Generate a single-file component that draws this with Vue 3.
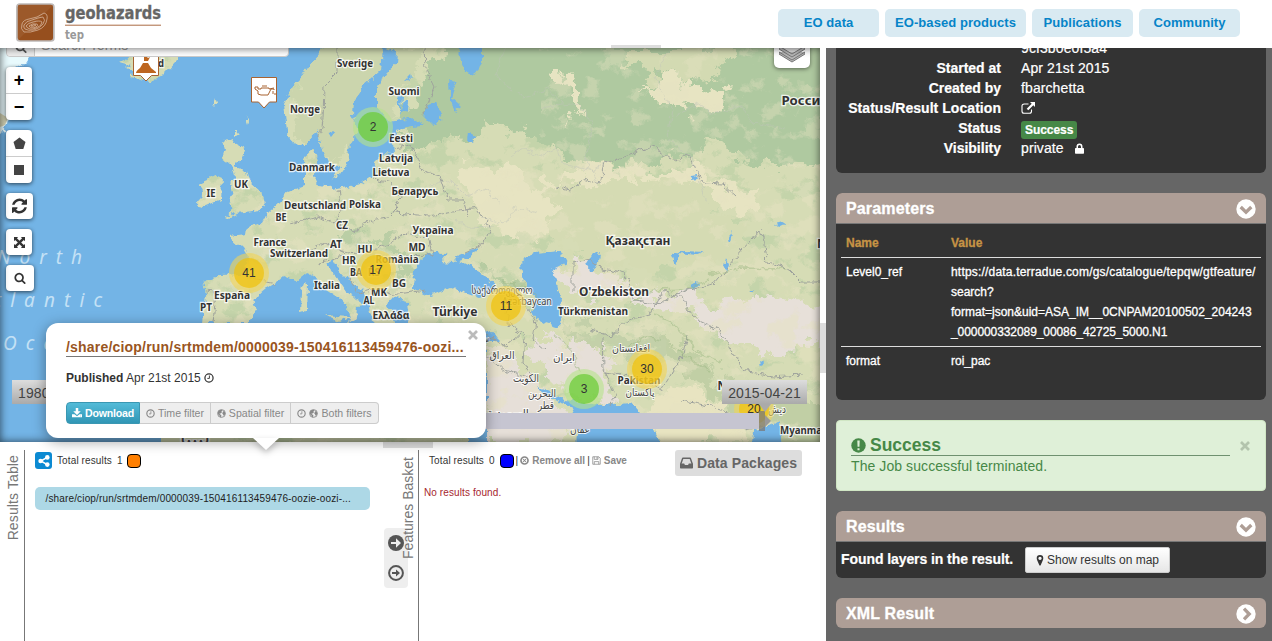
<script setup>
const nav = ['EO data', 'EO-based products', 'Publications', 'Community']

const labels = [
  ['Sverige', 355, 67, 36], ['Suomi', 404, 95, 31], ['Norge', 305, 113, 30], ['Eesti', 401, 142, 24],
  ['Latvija', 396, 162, 34], ['Lietuva', 391, 176, 37], ['Danmark', 312, 171, 46], ['Беларусь', 415, 195, 47],
  ['Deutschland', 315, 209, 62], ['Polska', 365, 208, 32], ['BE', 281, 221, 11], ['UK', 241, 188, 14],
  ['IE', 211, 197, 9], ['CZ', 342, 229, 12], ['Україна', 433, 234, 41], ['France', 270, 246, 33],
  ['Switzerland', 299, 257, 58], ['AT', 336, 248, 12], ['HU', 365, 253, 15], ['MD', 417, 251, 17],
  ['HR', 349, 264, 14], ['România', 397, 263, 43], ['BA', 356, 276, 12], ['RS', 374, 276, 12],
  ['Italia', 327, 289, 26], ['BG', 399, 287, 14], ['MK', 379, 296, 16], ['AL', 369, 304, 11],
  ['Ελλάδα', 391, 319, 37], ['España', 232, 299, 36], ['PT', 206, 311, 12], ['Pakistan', 639, 384, 43],
  ['Türkmenistan', 593, 315, 70], ['Myanma', 801, 434, 42], ['d', 161, 67, 6]
]
const bigLabels = [
  ['Türkiye', 455, 316, 45], ['Қазақстан', 638, 245, 65], ["O'zbekiston", 614, 296, 70], ['Росси', 801, 105, 39], ['N', 822, 248, 10], ['N', 722, 390, 9]
]
const thinLabels = [
  ['საქართველო', 502, 294, 61], ['Azərbaycan', 527, 305, 50], ['ایران', 564, 361, 22], ['العراق', 502, 359, 25],
  ['الكويت', 526, 382, 26], ['البحرين', 542, 397, 28], ['قطر', 546, 409, 16], ['افغانستان', 631, 352, 38],
  ['پاکستان', 640, 396, 29], ['السعودية', 508, 417, 42], ['عمان', 580, 433, 20], ['دیش', 777, 413, 18], ['ليبيا', 195, 443, 30], ['س', 486, 342, 6]
]
const clusters = [
  { n: 2, x: 373, y: 127, c: 'green' }, { n: 41, x: 249, y: 273, c: 'yellow' }, { n: 17, x: 376, y: 270, c: 'yellow' },
  { n: 11, x: 506, y: 306, c: 'yellow' }, { n: 30, x: 647, y: 369, c: 'yellow' }, { n: 3, x: 584, y: 389, c: 'green' },
  { n: 20, x: 754, y: 409, c: 'yellow' }
]
const filters = [
  { icons: ['clock'], text: 'Time filter', w: 71 },
  { icons: ['globe'], text: 'Spatial filter', w: 80 },
  { icons: ['clock', 'globe'], text: 'Both filters', w: 88 }
]
</script>

<template>
  <svg class="defs" aria-hidden="true">
    <symbol id="search" viewBox="0 0 1792 1792"><path d="M1216 832q0-185-131.5-316.5t-316.5-131.5-316.5 131.5-131.5 316.5 131.5 316.5 316.5 131.5 316.5-131.5 131.5-316.5zm512 832q0 52-38 90t-90 38q-54 0-90-38l-343-342q-179 124-399 124-143 0-273.5-55.5t-225-150-150-225-55.5-273.5 55.5-273.5 150-225 225-150 273.5-55.5 273.5 55.5 225 150 150 225 55.5 273.5q0 220-124 399l343 343q37 37 37 90z"/></symbol>
    <symbol id="refresh" viewBox="128 128 1536 1536"><path d="M1639 1056q0 5-1 7-64 268-268 434.5t-478 166.5q-146 0-282.5-55t-243.5-157l-129 129q-19 19-45 19t-45-19-19-45v-448q0-26 19-45t45-19h448q26 0 45 19t19 45-19 45l-137 137q71 66 161 102t187 36q134 0 250-65t186-179q11-17 53-117 8-23 30-23h192q13 0 22.500 9.500t9.500 22.500zm25-800v448q0 26-19 45t-45 19h-448q-26 0-45-19t-19-45 19-45l138-138q-148-137-349-137-134 0-250 65t-186 179q-11 17-53 117-8 23-30 23h-199q-13 0-22.500-9.500t-9.500-22.500v-7q65-268 270-434.500t480-166.500q146 0 284 55.500t245 156.500l130-129q19-19 45-19t45 19 19 45z"/></symbol>
    <symbol id="expand" viewBox="0 0 12 12"><path d="M0 0h4.500L3.200 1.300 6 4.200 8.800 1.300 7.500 0H12v4.500l-1.300-1.300L7.800 6l2.900 2.800L12 7.500V12H7.500l1.300-1.300L6 7.800l-2.800 2.900L4.500 12H0V7.500l1.300 1.300L4.200 6 1.300 3.200 0 4.500z"/></symbol>
    <symbol id="clock" viewBox="0 0 12 12"><circle cx="6" cy="6" r="4.900" fill="none" stroke="currentColor" stroke-width="1.500"/><path d="M6.500 3v3.500H4" fill="none" stroke="currentColor" stroke-width="1.100"/></symbol>
    <symbol id="globe" viewBox="0 0 12 12"><circle cx="6" cy="6" r="5.200" fill="none" stroke="currentColor" stroke-width="1.200"/><path d="M1 4l2-2.500 3-.5 1.500 1-1.500 1 .5 1.500L4.500 6 3 6.200 5 7.500 6 9l-1 2.500L3.500 9 1.500 7zM8.500 2.500l2 1.500.7 2-1 2-1.500 1L8 7l-1-1 .5-1.500z"/></symbol>
    <symbol id="download" viewBox="0 0 12 12"><path d="M4.500 0h3v4h3L6 8.300 1.500 4h3zM0 7.500h3L6 10l3-2.500h3V11H0zM9.800 9.200v.8h.9v-.8z"/></symbol>
    <symbol id="share" viewBox="0 0 12 12"><path d="M9 2.300 3 6l6 3.700" fill="none" stroke="currentColor" stroke-width="1.500"/><circle cx="9.300" cy="2.400" r="2.300"/><circle cx="2.600" cy="6" r="2.300"/><circle cx="9.300" cy="9.600" r="2.300"/></symbol>
    <symbol id="remove" viewBox="0 0 12 12"><circle cx="6" cy="6" r="4.700" fill="none" stroke="currentColor" stroke-width="2.200"/><path d="M4 4l4 4M8 4L4 8" stroke="currentColor" stroke-width="1.400"/></symbol>
    <symbol id="save" viewBox="0 0 12 12"><path d="M1 1h8l2 2v8H1zM3 1v3.500h5V1M3 11V7.500h6V11" fill="none" stroke="currentColor"/><path d="M6 1.500h1.300v2H6z"/></symbol>
    <symbol id="inbox" viewBox="0 0 14 12"><path d="M3 1h8l2.200 6v4H.8V7z" fill="none" stroke="currentColor" stroke-width="1.600" stroke-linejoin="round"/><path d="M1 6.500h3.500L5.300 8.200h3.400l.8-1.700H13V11H1z"/></symbol>
    <symbol id="external" viewBox="0 0 14 12"><path d="M7.500 2H3.200Q1 2 1 4v5.300q0 2 2 2h5.500q2 0 2-2V7.500" fill="none" stroke="currentColor" stroke-width="1.100"/><path d="M9 0h5v5l-1.700-1.700-5 5L5.700 6.700l5-5z"/></symbol>
    <symbol id="lock" viewBox="0 0 10 12"><path d="M2.500 6V4q0-2.700 2.500-2.700T7.500 4v2" fill="none" stroke="currentColor" stroke-width="1.700"/><rect y="5.500" width="10" height="6.300" rx=".7"/></symbol>
    <symbol id="pin" viewBox="0 0 8 12"><path fill-rule="evenodd" d="M4 0a3.600 3.600 0 0 1 3.600 3.600Q7.600 5 6.500 7L4.600 11.500h-1.200L1.500 7Q.4 5 .4 3.600A3.600 3.600 0 0 1 4 0zm0 1.900a1.800 1.800 0 1 0 .01 0z"/></symbol>
    <symbol id="down" viewBox="0 0 20 20"><circle cx="10" cy="10" r="9.700"/><path d="M4.700 8l5.300 5.200L15.300 8" fill="none" stroke="#ae9e96" stroke-width="3.300"/></symbol>
    <symbol id="right" viewBox="0 0 20 20"><circle cx="10" cy="10" r="9.700"/><path d="M8 4.700l5.200 5.300L8 15.300" fill="none" stroke="#ae9e96" stroke-width="3.300"/></symbol>
    <symbol id="arrow-solid" viewBox="0 0 16 16"><circle cx="8" cy="8" r="8"/><path d="M3 6.900h5V3.200L13 8l-5 4.800V9.100H3z" fill="#eee"/></symbol>
    <symbol id="arrow-open" viewBox="0 0 16 16"><circle cx="8" cy="8" r="6.900" fill="none" stroke="currentColor" stroke-width="2"/><path d="M4 6.900h4V4.500L12 8l-4 3.500V9.100H4z"/></symbol>
    <symbol id="exclaim" viewBox="0 0 16 16"><circle cx="8" cy="8" r="7.700"/><path d="M6.700 2.700h2.600L9 9.400H7zM6.900 10.800h2.200V13H6.900z" fill="#dff0d8"/></symbol>
    <symbol id="close" viewBox="0 0 10 10"><path d="M1 1l8 8M9 1L1 9" stroke="currentColor" stroke-width="2.700"/></symbol>
  </svg>

  <div class="page">
    <header class="header">
      <svg class="logo" width="160" height="48" viewBox="0 0 160 48">
        <rect x="16.900" y="4" width="37" height="37" rx="3" fill="#964f1e" stroke="#bdb9b8" stroke-width="1.700"/>
        <path d="M18 5h35L18 40z" fill="#a4673a" opacity=".45"/>
        <g fill="none" stroke="#d4b399" stroke-width=".8">
          <path d="M22 24q1-4 7-5l8-2 7-4q4 1 3 6-1 8-9 11-8 3-14 2-4-3-2-8z"/>
          <path d="M24 25q2-4 8-5l6-2 5-1q3 3 0 7-3 4-9 6-6 1-9-1-2-2-1-4z"/>
          <path d="M26 26q2-3 7-4 7-2 9 0 0 4-6 6-7 3-10-2z"/>
          <path d="M29 26q3-3 8-2 2 1-1 3-5 2-7-1zM31 26q3-2 5-1-2 2-5 1"/>
        </g>
        <text x="65" y="18.500" class="brand" textLength="96" lengthAdjust="spacingAndGlyphs">geohazards</text>
        <path d="M65 25.200h96" stroke="#aa6a43"/>
        <text x="65" y="39" class="tep" textLength="19" lengthAdjust="spacingAndGlyphs">tep</text>
      </svg>
      <nav><a v-for="item in nav" :key="item">{{ item }}</a></nav>
      <i class="handle top"></i>
    </header>

    <main class="body">
      <section class="left">
        <div class="map">
          <svg class="geo" width="820" height="394" viewBox="0 48 820 394">
            <defs>
              <filter id="rough" filterUnits="userSpaceOnUse" x="-20" y="30" width="860" height="430" color-interpolation-filters="sRGB"><feTurbulence type="fractalNoise" baseFrequency=".13" numOctaves="3" seed="4" result="n"/><feDisplacementMap in="SourceGraphic" in2="n" scale="8" xChannelSelector="R" yChannelSelector="G"/></filter>
              <filter id="blob" filterUnits="userSpaceOnUse" x="-20" y="30" width="860" height="430" color-interpolation-filters="sRGB"><feTurbulence type="fractalNoise" baseFrequency=".05" numOctaves="5" seed="8" result="n"/><feDisplacementMap in="SourceGraphic" in2="n" scale="40" xChannelSelector="R" yChannelSelector="G"/></filter>
              <filter id="patch" x="0" y="0" width="100%" height="100%" color-interpolation-filters="sRGB"><feTurbulence type="fractalNoise" baseFrequency=".035 .05" numOctaves="5" seed="12"/><feColorMatrix values="0 0 0 0 .9  0 0 0 0 .885  0 0 0 0 .76  9 0 0 0 -4.900"/></filter>
              <filter id="forest" x="0" y="0" width="100%" height="100%" color-interpolation-filters="sRGB"><feTurbulence type="fractalNoise" baseFrequency=".04 .06" numOctaves="5" seed="31"/><feColorMatrix values="0 0 0 0 .72  0 0 0 0 .81  0 0 0 0 .64  9 0 0 0 -5.100"/></filter>
              <clipPath id="land">
                <path d="M325 30L325 48 312 62 302 77 292 88 284 104 287 132 293 144 303 145 312 136 319 130 323 150 330 165 340 166 330 187 318 185 314 176 318 163 314 149 304 158 304 185 288 191 280 202 268 213 262 224 247 227 246 234 230 236 242 247 248 257 246 275 220 276 203 281 206 294 203 323 248 323 256 310 253 300 266 289 277 282 284 276 297 281 307 273 317 277 326 290 341 300 351 313 347 323 356 318 357 306 366 305 346 292 333 273 327 264 334 259 338 268 350 282 362 290 370 307 375 326 385 335 399 330 393 315 387 305 393 297 407 301 409 325 470 337 490 330 532 383 550 392 565 400 600 405 633 403 648 420 670 460 752 460 754 430 768 426 780 421 783 460 840 460V30z"/>
                <path d="M223 141l12-3-1 5 11 6-3 10-9 7 13 5 3 11 13 12 3 9-5 8-25 3-12 6 12-11-7-6 5-10-3-9 5-5-4-14-9-6 3-10z"/>
                <path d="M213 175l9 4-1 21-21 9-3-4 6-13-5-7 9-4zM120 62l8-4-3-10h52v12l-12 13-16 9-19-5 6-5-9-4 4-3zM304 282l4 4-1 24-6 1 1-18zM325 315l25 2-10 6z"/>
                <path d="M486 340h20l26 38 13 18 24 8 8 18-1 40H486zM162 436h306v20H162z"/>
              </clipPath>
            </defs>
            <path d="M0 48h820v394H0z" fill="#73b4e6"/>
            <path d="M-8 40h36v17l-5 8-8 4-3 35-7 28-13 3z" fill="#e8fafd" filter="url(#rough)"/>
            <path d="M0 113l8 5-3 7-5 2z" fill="#d2d1b3"/>
            <g filter="url(#rough)">
              <g clip-path="url(#land)">
                <path d="M0 30h840v430H0z" fill="#d6dcb5"/>
                <path d="M0 48h820v394H0z" filter="url(#forest)" opacity=".6"/>
                <g filter="url(#blob)">
                  <path d="M465 20h400v140L770 170l-60-27-40 15-45 12-60-11-50-33-95 22-25-18z" fill="#afc9a0"/>
                  <path d="M325 20l95 31-20 57-40 45-30 10-38-27 5-50z" fill="#cbd5ad"/>
                  <path d="M455 165l65 5 30 15 50-18 55 8 35-15 35 24 30 2-3 31-45-12-90-4-45 15-40 25-60-20z" fill="#e7e4c2"/>
                  <path d="M645 83l40-4 50 15-18 15-60 1zM560 65l15 25 4 25-13-14-12-30z" fill="#e7e4c2"/>
                  <path d="M625 48h110l-20 28-55 4-25-15z" fill="#d3dab2"/>
                  <path d="M550 190l55-10 60-2 45 15 15 25 30 22-40 22-60 10-70-5-30-30z" fill="#d5dbb3"/>
                  <path d="M580 258l65 35 50-5 10 20 60-13 60 8v40l-65 10-40-15-60-35-80-10-45-15z" fill="#e7e0d9"/>
                  <path d="M540 330l65 20 10 50-45-2-38-38zM486 335l35 30 50 60-10 20h-80z" fill="#e6dfd8"/>
                  <path d="M570 318l40 20 48-10 15 18-40 12-55-16z" fill="#c3d0a9"/>
                  <path d="M445 300l65-25 35 18-20 20 30 28-15 4-30-18-75 5z" fill="#d6dcb3"/>
                  <path d="M480 260l20 17 30 7 5 10-32-5-25-19z" fill="#b6cba1"/>
                  <path d="M655 330l40 20 20 30 20 8 40-5 60 30v60h-50l-20-55-50-20-30-25z" fill="#c1cfa5"/>
                  <path d="M660 385l50 15 35 20-5 25h-75l-25-30z" fill="#e8e4c1"/>
                  <path d="M335 237l62 4 15 18-10 24-14 13-5-14 20-15-2-13-28-8-30 8z" fill="#bacea5"/>
                </g>
                <path d="M280 165h180l60 70 60 60h240v147H200V210z" filter="url(#patch)" opacity=".5"/>
                <path d="M540 48h280v130H580z" filter="url(#patch)" opacity=".4"/>
              </g>
              <g fill="#73b4e6">
                <path d="M383 48l15 5-1 10-10 9-10 17v18l12 15 24-4 12 7-28 5-4 12 1 13-12-1-7 7-1 14-14 9-28 6-4-8 12-7 8-12 3-20 7-12-5-15 1-15 9-14 18-16z"/>
                <path d="M413 288l1-16 9-13 12-9 12 5-6 7 12 1 6-8 19-8-6 10-13 4 24 13 18 17-23 7-28-10-20 8z"/>
                <path d="M520 263l15-10 25-3 7 13-14 7 4 20 5 10-2 27-20-6-8-9 4-10-10-17-5-10z"/>
                <path d="M453 40h29v24l-8 12-9-6-4-12zM428 105l8-3 6 18-10 4-9-9zM449 80l7 5-4 13 9 8-6 5-5-9zM468 132l8 5-3 6-6-3zM590 255l10-4-3 16-8 5-3-9zM672 255l12-5 21 1-10 4-15-2-4 12zM691 176l6-1 1 4-8 1zM690 285l8-3 2 3-7 3zM406 78l3-3 1 5zM398 92l4 3-1 16 3-9 6-3-2 10-8 5zM327 132l8-1-5 6z"/>
                <path d="M725 258l3 9-2 5-3-6zM775 224l8-2 2 3-6 3zM733 229l-3 13-2-2zM760 361l5 2-4 2zM748 291l5-2 2 2z"/>
              </g>
              <path d="M346 142l4 6-5 6zM214 98l2 6-2 3zM246 115l1 7-1 3zM236 130l3 4-3 2z" fill="#d9dfb9"/>
              <path d="M337 48v24l-13 13-1 35-3 17M425 48l1 20 9 19-12 28M395 148l15-3 7 10 5 15 18 5 8 25h15l5 16M373 178l18 5 8 15-5 15 35 3 48-8 13 20-7 16-18 8M338 190l3 20-7 15M290 224l27-8 20 8 16 8 18-12 17-3 10-10M298 255l28-12 21 10 30-3 32-18 20 8 3 15-27 1M318 263l26-7 10 12-5 11 10 15 18-6 15 7 33-5M246 278l30 6M206 292l10 1-3 30M555 187l15 4 17-12 13 4 5-20 50-18 6 9 17 6 10-5 15 28 20 1 13 12M573 290v-27l16-4 14 10 21 5 11 26 27 4 10-8 22-8 20-4 20-25 26-29 5 14 2 18 22 8 12 12h23M590 330l20 6 18-16 23-5 12-24 18 6 15 22 22 10 12 20 17 23 25 5 31-2M603 338l1 31 11 25-5 14M604 373l35 4 22 14 12-20 10-17 4-18M520 298l16 22-3 20 12 10M510 298l-3 25 18 13-2 27 12 15M486 335l20 11 14-12M486 355l18 15 28 8M680 400l30 6 25 8 10 15 20-4" fill="none" stroke="#9fa39d" stroke-width="1"/>
              <path d="M505 48l-10 25 13 15M540 108l38-5 15 20-7 37 12 23M670 48l-15 30 17 30-5 30 25 20 15 45M510 157l10-8 20 7 17-8 5 15 30 8 15-8M508 88l15 9 25-8 15 14M430 185l20-5 15 15 22-6 13 16M675 118l22-15 15 10 30-7 10 17 34 5M480 218l25 5 10-16 22 6M455 217l10 9 30 1" fill="none" stroke="#bfc4ba" stroke-width=".7" opacity=".7"/>
              <path d="M500 282l25 5 17 15M555 335l17 15 7 24M620 350l25-14 15 3M669 344l20 15 20 10M710 275l30-7 45 1M655 315l17 7 30 33 20 6M630 303l23-13 35-1 20-10" fill="none" stroke="#98b681" stroke-width="1.500" opacity=".45"/>
            </g>
            <g class="ocean"><text x="-3" y="264" textLength="85">North</text><text x="-25" y="307" textLength="127">Atlantic</text><text x="3" y="350" textLength="90">Ocean</text></g>
            <text v-for="(l, i) in thinLabels" :key="'t' + i" class="thin" :x="l[1]" :y="l[2]" :textLength="l[3]" lengthAdjust="spacingAndGlyphs">{{ l[0] }}</text>
            <text v-for="(l, i) in labels" :key="'l' + i" class="place" :x="l[1]" :y="l[2]" :textLength="l[3]" lengthAdjust="spacingAndGlyphs">{{ l[0] }}</text>
            <text v-for="(l, i) in bigLabels" :key="'b' + i" class="place big" :x="l[1]" :y="l[2]" :textLength="l[3]" lengthAdjust="spacingAndGlyphs">{{ l[0] }}</text>
            <g v-for="c in clusters" :key="c.n" :class="c.c">
              <circle :cx="c.x" :cy="c.y" r="20" class="halo"/><circle :cx="c.x" :cy="c.y" r="15" class="core"/>
              <text :x="c.x" :y="c.y + 4" class="count">{{ c.n }}</text>
            </g>
            <g fill="#fff" stroke="#a86331">
              <path d="M133.500 45h25v30.500h-7L146 81l-5.500-5.500h-7z"/>
              <path d="M251.500 77.500h25v24.500h-7l-5.500 6-5.500-6h-7z"/>
            </g>
            <path d="M136 73q0-2 4-5l3-5h5l3 5 5 4v1zM144 56h2l2 2 2-1-2 4h-4z" fill="#bd6620"/>
            <path d="M255 87h3v2h3v-1h8v1l5-1M255 87v2l3 2v3l3 1h7l3-6h3v1M262 86h5M273 91v3M275 93v2" fill="none" stroke="#a86331"/>
          </svg>
          <div class="search-box"><span><svg width="12" height="12"><use href="#search"/></svg></span><b>Search Terms</b></div>
          <div class="controls">
            <div class="ctl two"><b>+</b><b>−</b></div>
            <div class="ctl two"><b><svg width="13" height="13" viewBox="0 0 13 13"><path d="M6.500.5l6 4.500-2.200 7H2.700L.5 5z"/></svg></b><b><svg width="10" height="10"><path d="M0 0h10v10H0z"/></svg></b></div>
            <div class="ctl mid"><svg width="15" height="16"><use href="#refresh"/></svg></div>
            <div class="ctl"><svg width="11" height="11"><use href="#expand"/></svg></div>
            <div class="ctl wide"><svg width="12" height="12"><use href="#search"/></svg></div>
          </div>
          <div class="layers"><svg width="26" height="26" viewBox="0 0 26 26"><path d="M0 7l13-7 13 7-13 8z" fill="#e0e0e0"/><g fill="none" stroke="#777" stroke-width="1"><path d="M0 7l13 8 13-8v3l-13 8L0 10zM0 13l13 8 13-8M0 13v2l13 8 13-8v-2" fill="#b8b8b8"/></g></svg></div>
          <div class="timeline"></div><i class="tick"></i><i class="tick-arrow"></i>
          <div class="date start">1980</div>
          <div class="date end">2015-04-21</div>
          <div class="shade"></div>
        </div>

        <div class="lower">
          <i class="handle bottom"></i>
          <div class="vtab">Results Table</div>
          <div class="results">
            <div class="toolbar"><span class="share"><svg width="12" height="12"><use href="#share"/></svg></span><span class="total">Total results</span><span class="num">1</span><i class="swatch orange"></i></div>
            <div class="item">/share/ciop/run/srtmdem/0000039-150416113459476-oozie-oozi-...</div>
          </div>
          <div class="transfer"><svg width="16" height="16"><use href="#arrow-solid"/></svg><svg width="16" height="16"><use href="#arrow-open"/></svg></div>
          <div class="vtab second">Features Basket</div>
          <div class="basket">
            <div class="toolbar"><span>Total results</span><span class="num">0</span><i class="swatch blue"></i><span class="sep">|</span><svg width="9" height="9"><use href="#remove"/></svg><b class="rm">Remove all</b><span class="sep">|</span><svg width="9" height="9"><use href="#save"/></svg><b class="sv">Save</b></div>
            <div class="packages"><svg width="13" height="12"><use href="#inbox"/></svg><span>Data Packages</span></div>
            <p>No results found.</p>
          </div>
        </div>

        <article class="popup">
          <svg class="x" width="10" height="10"><use href="#close"/></svg>
          <h3>/share/ciop/run/srtmdem/0000039-150416113459476-oozi...</h3>
          <p><b>Published</b> Apr 21st 2015 <svg width="10" height="10"><use href="#clock"/></svg></p>
          <div class="buttons">
            <a class="primary"><svg width="10" height="10"><use href="#download"/></svg><span>Download</span></a>
            <a v-for="f in filters" :key="f.text" :style="{ width: f.w + 'px' }"><svg v-for="i in f.icons" :key="i" width="9" height="9"><use :href="'#' + i"/></svg><span>{{ f.text }}</span></a>
          </div>
        </article>
      </section>

      <div class="gutter"></div>

      <aside class="side">
        <section class="info">
          <dl>
            <dt></dt><dd>9cf3b0e0f5a4</dd>
            <dt>Started at</dt><dd>Apr 21st 2015</dd>
            <dt>Created by</dt><dd>fbarchetta</dd>
            <dt class="tight">Status/Result Location</dt><dd><svg width="14" height="12"><use href="#external"/></svg></dd>
            <dt>Status</dt><dd><span class="badge">Success</span></dd>
            <dt>Visibility</dt><dd>private <svg class="lock" width="9" height="11"><use href="#lock"/></svg></dd>
          </dl>
        </section>
        <section class="card params">
          <h4>Parameters<svg width="20" height="20"><use href="#down"/></svg></h4>
          <div class="table">
            <div class="row head"><b>Name</b><b>Value</b></div>
            <div class="row"><span>Level0_ref</span><span><i class="l1">https://data.terradue.com/gs/catalogue/tepqw/gtfeature/</i><br>search?<br>format=json&amp;uid=ASA_IM__0CNPAM20100502_204243<br><i class="l4">_000000332089_00086_42725_5000.N1</i></span></div>
            <div class="row"><span>format</span><span>roi_pac</span></div>
          </div>
        </section>
        <section class="alert">
          <h5><svg width="15" height="15"><use href="#exclaim"/></svg>Success</h5>
          <p>The Job successful terminated.</p>
          <svg class="x" width="10" height="10"><use href="#close"/></svg>
        </section>
        <section class="card res">
          <h4>Results<svg width="20" height="20"><use href="#down"/></svg></h4>
          <div class="found"><b>Found layers in the result.</b><a><svg width="8" height="11"><use href="#pin"/></svg>Show results on map</a></div>
        </section>
        <section class="card"><h4 class="closed">XML Result<svg width="20" height="20"><use href="#right"/></svg></h4></section>
      </aside>
    </main>
  </div>
</template>

<style>
body { margin: 0; overflow: hidden; }
</style>

<style scoped>
* { box-sizing: border-box; }
svg { fill: currentColor; flex: none; }
.defs { position: absolute; width: 0; height: 0; }
.page { width: 1272px; height: 641px; overflow: hidden; background: #fff; color: #333; font-family: "Liberation Sans", "Noto Sans", sans-serif; display: flex; flex-direction: column; }
.header { height: 48px; flex: none; display: flex; justify-content: space-between; padding-right: 32px; position: relative; }
.logo { overflow: visible; }
.brand { font: bold 17px "DejaVu Sans Condensed", "DejaVu Sans", sans-serif; fill: #666; stroke: #666; stroke-width: .3px; }
.tep { font: bold 12.500px "DejaVu Sans Condensed", "DejaVu Sans", sans-serif; fill: #999; }
nav { display: flex; gap: 6px; padding-top: 9px; }
nav a { height: 28px; min-width: 101px; padding: 0 10px; border-radius: 5px; background: #d9eaf2; color: #0684c8; font: bold 13px/28px "Liberation Sans", sans-serif; text-align: center; letter-spacing: .06px; }
.handle { position: absolute; width: 50px; background: #ddd; }
.handle.top { left: 611px; bottom: 0; height: 3px; }
.handle.bottom { left: 383px; top: 0; height: 6px; }
.body { display: flex; flex: 1; min-height: 0; }
.left { width: 820px; display: flex; flex-direction: column; position: relative; }
.map { height: 394px; flex: none; position: relative; overflow: hidden; }
.geo { display: block; }
.shade { position: absolute; inset: 0; box-shadow: inset 0 0 8px rgba(0,0,0,.65); }
.place { font: bold 10.500px "Noto Sans", "Open Sans", sans-serif; fill: #333; stroke: #fff; stroke-width: 2.500px; stroke-opacity: .8; paint-order: stroke; text-anchor: middle; }
.place.big { font-size: 12.500px; }
.thin { font: 11px "Noto Sans", "DejaVu Sans", sans-serif; fill: #444; stroke: #fff; stroke-width: 2px; stroke-opacity: .8; paint-order: stroke; text-anchor: middle; }
.ocean { font: italic 19px "Noto Sans", "Open Sans", sans-serif; fill: #c4e1f5; }
.count { font: 12px "Liberation Sans", sans-serif; fill: #333; text-anchor: middle; }
.green .halo { fill: rgba(181,226,140,.6); }
.green .core { fill: rgba(110,204,57,.75); }
.yellow .halo { fill: rgba(241,211,87,.6); }
.yellow .core { fill: rgba(240,194,12,.72); }
.search-box { position: absolute; left: 6px; top: -20px; width: 283px; height: 29px; background: #fff; border: 1px solid #ccc; border-radius: 4px; display: flex; }
.search-box span { width: 28px; background: #eee; border-right: 1px solid #ccc; color: #555; display: flex; align-items: center; justify-content: center; padding-top: 8px; border-radius: 4px 0 0 4px; }
.search-box b { font: 14px/32px "Liberation Sans", sans-serif; color: #999; padding-left: 6px; letter-spacing: .1px; }
.controls { position: absolute; left: 6px; top: 19px; display: flex; flex-direction: column; gap: 10px; color: #333; align-items: flex-start; }
.ctl { width: 26px; height: 26px; background: #fff; border-radius: 4px; box-shadow: 0 1px 4px rgba(0,0,0,.65); display: flex; align-items: center; justify-content: center; }
.ctl.two { height: 53px; flex-direction: column; }
.ctl.two b { height: 26px; width: 26px; display: flex; align-items: center; justify-content: center; font: bold 18px "Liberation Sans", sans-serif; color: #000; }
.ctl.two b svg { color: #444; }
.ctl.two b + b { border-top: 1px solid #ccc; height: 27px; }
.ctl.mid { width: 27px; }
.ctl.wide { width: 28px; }
.layers { position: absolute; left: 774px; top: -16px; width: 36px; height: 36px; background: #fff; border-radius: 5px; box-shadow: 0 1px 4px rgba(0,0,0,.5); padding: 7px 5px; }
.timeline { position: absolute; left: 46px; top: 365px; width: 713px; height: 16px; background: #c6c5d1; }
.tick { position: absolute; left: 759px; top: 363px; width: 6px; height: 20px; background: rgba(120,120,120,.75); }
.tick-arrow { position: absolute; left: 765px; top: 367px; border: 6px solid transparent; border-left-color: #999; border-right: 0; }
.date { position: absolute; top: 332px; height: 24px; background: linear-gradient(#ddd, #aaa); font-size: 14px; line-height: 26px; color: #444; padding-left: 6px; letter-spacing: .1px; }
.date.start { left: 12px; width: 60px; }
.date.end { left: 722px; width: 85px; padding: 0; text-align: center; }
.date.end::after { content: ""; position: absolute; left: 37px; top: 24px; border: 6px solid transparent; border-top: 8px solid #aaa; border-bottom: 0; }
.gutter { width: 6px; background: linear-gradient(#ddd, #ddd) 0 275px / 6px 50px no-repeat; }

.lower { flex: 1; display: flex; position: relative; padding-top: 8px; font-size: 10px; }
.vtab { width: 25px; border-right: 1px solid #777; writing-mode: sideways-lr; text-align: right; padding-top: 5px; font-size: 14px; color: #777; line-height: 26px; letter-spacing: .12px; }
.vtab.second { padding-top: 7px; margin-left: auto; z-index: 1; line-height: 28px; letter-spacing: 0; }
.results { width: 345px; padding: 2px 0 0 10px; }
.toolbar { display: flex; align-items: center; height: 18px; white-space: nowrap; letter-spacing: .12px; position: relative; top: -.5px; }
.share { width: 17px; height: 17px; border-radius: 3px; background: #0c8ad2; color: #fff; display: flex; align-items: center; justify-content: center; margin-right: 5px; }
.num { margin: 0 5px; }
.results .num { margin-right: 4px; }
.swatch { width: 14px; height: 14px; border: 1px solid #000; border-radius: 4px; }
.orange { background: #ff7f00; }
.blue { background: #00f; }
.item { margin-top: 17px; width: 335px; height: 23px; border-radius: 5px; background: #add8e6; padding-left: 10.500px; line-height: 23px; font-size: 10px; color: #222; white-space: nowrap; letter-spacing: .15px; }
.transfer { position: absolute; left: 384px; top: 86px; width: 24px; height: 60px; border-radius: 4px; background: #eee; color: #555; display: flex; flex-direction: column; align-items: center; gap: 14px; padding-top: 7px; }
.basket { width: 401px; padding: 2px 0 0 10px; position: relative; }
.basket .sep { margin: 0 2px; color: #333; }
.basket b { color: #888; margin-left: 3px; }
.basket .rm { letter-spacing: 0; }
.basket .sv { letter-spacing: -.1px; }
.basket .toolbar svg { color: #888; }
.basket p { margin: 18px 0 0 -5px; color: #a6262e; line-height: 10px; letter-spacing: .1px; }
.packages { position: absolute; left: 256px; top: 0; width: 127px; height: 26px; background: #ddd; border-radius: 3px; color: #666; display: flex; align-items: center; gap: 4px; padding-left: 5px; font: bold 14px "Liberation Sans", sans-serif; white-space: nowrap; letter-spacing: .1px; }

.popup { position: absolute; z-index: 3; left: 46px; top: 275px; width: 440px; height: 115px; border-radius: 12px; background: #fff; box-shadow: 0 3px 14px rgba(0,0,0,.4); padding: 16px 20px; }
.popup::after { content: ""; position: absolute; left: 207px; bottom: -12px; border: 13px solid transparent; border-top: 12px solid #fff; border-bottom: 0; filter: drop-shadow(0 3px 3px rgba(0,0,0,.25)); }
.popup .x { position: absolute; left: 422px; top: 7px; color: #bbb; }
.popup h3 { margin: 0; height: 18px; border-bottom: 1px solid #777; color: #995522; font: bold 14px/17px "Liberation Sans", sans-serif; white-space: nowrap; letter-spacing: .2px; }
.popup p { margin: 13px 0 0; font-size: 12px; line-height: 16px; }
.popup p svg { vertical-align: -1px; }
.buttons { display: flex; margin-top: 16px; height: 22px; width: 313px; }
.buttons a { display: flex; align-items: center; justify-content: center; gap: 3px; border: 1px solid #ccc; border-left-width: 0; background: #eee; color: #888; font-size: 10.600px; white-space: nowrap; }
.buttons a:last-child { border-radius: 0 4px 4px 0; }
.buttons .primary { width: 74px; border: 1px solid #3a97b2; border-radius: 4px 0 0 4px; background: linear-gradient(#53bbd8, #3096b5); color: #fff; font-weight: bold; letter-spacing: -.2px; }

.side { width: 446px; background: #666; color: #fff; padding: 0 6px 0 10px; overflow: hidden; }
.info { height: 125px; background: #333; border-radius: 0 0 6px 6px; overflow: hidden; }
dl { margin: -10px 0 0; display: grid; grid-template-columns: 165px 1fr; column-gap: 20px; grid-auto-rows: 20px; font-size: 14px; line-height: 20px; -webkit-text-stroke: .2px; }
dt { font-weight: bold; text-align: right; white-space: nowrap; }
dt.tight { letter-spacing: .05px; }
dd { margin: 0; letter-spacing: .1px; }
dd:nth-child(2) { line-height: 21px; }
dd svg { vertical-align: -1px; }
.lock { margin-left: 7px; }
.badge { display: inline-block; height: 18px; border-radius: 3px; background: #468847; padding: 0 4px; font: bold 12px/18px "Liberation Sans", sans-serif; vertical-align: -1px; letter-spacing: -.05px; }
.card { margin-top: 20px; background: #333; border-radius: 6px; overflow: hidden; }
.params { height: 207px; }
.res { height: 67px; }
h4 { margin: 0; height: 31px; background: #ae9e96; border-bottom: 1px solid #777; padding: 2px 10px 0 10px; display: flex; align-items: center; justify-content: space-between; font: bold 16px/28px "Liberation Sans", sans-serif; letter-spacing: .15px; -webkit-text-stroke: .3px; }
h4.closed { height: 30px; border: 0; }
.table { margin: 0 5px; font-size: 12px; -webkit-text-stroke: .3px; }
.row { display: grid; grid-template-columns: 105px 1fr; padding: 4px 5px; line-height: 20px; border-top: 1px solid #ddd; white-space: nowrap; }
.row.head { border: 0; color: #c69345; padding: 9px 5px 4px; }
.row i { font-style: normal; }
.row .l1 { letter-spacing: .19px; }
.row .l4 { letter-spacing: -.08px; }
.alert { position: relative; margin-top: 20px; height: 71px; background: #dff0d8; border: 1px solid #d0e6c4; border-radius: 4px; padding: 14px 35px 0 14px; color: #468847; }
h5 { margin: 0; height: 21px; border-bottom: 1px solid #6f9170; display: flex; align-items: center; gap: 4px; font: bold 17.500px/20px "Liberation Sans", sans-serif; }
.alert p { margin: 0; font-size: 14px; line-height: 20px; letter-spacing: .08px; }
.alert .x { position: absolute; left: 403px; top: 20px; color: #b3c4ad; }
.found { display: flex; padding: 5px; gap: 12px; font-size: 14px; line-height: 25px; white-space: nowrap; }
.found b { width: 172px; letter-spacing: -.08px; -webkit-text-stroke: .2px; }
.found a { width: 145px; height: 26px; background: linear-gradient(#fff, #e6e6e6); border: 1px solid #ccc; border-radius: 2px; color: #333; font-size: 12px; line-height: 24px; display: flex; align-items: center; justify-content: center; gap: 3px; }
</style>
